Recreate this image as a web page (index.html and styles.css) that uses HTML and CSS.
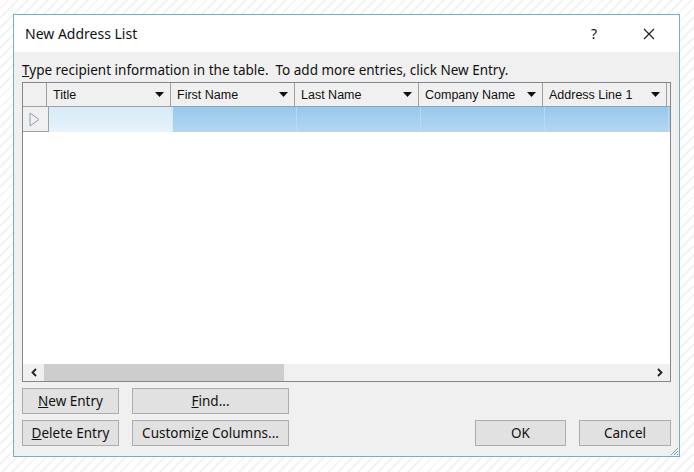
FILE: index.html
```html
<!DOCTYPE html>
<html lang="en">
<head>
    <meta charset="UTF-8">
    <title>New Address List</title>
    <link rel="stylesheet" href="styles.css">
</head>
<body>
    <div class="dialog">
        <!-- Title bar -->
        <div class="titlebar">
            <span class="title">New Address List</span>
            <span class="help">?</span>
            <span class="close">
                <svg width="12" height="12" viewBox="0 0 12 12"><path d="M1 1L11 11M11 1L1 11" stroke="#222" stroke-width="1.2" fill="none"/></svg>
            </span>
        </div>

        <div class="content">
            <p class="hint"><u>T</u>ype recipient information in the table.&nbsp; To add more entries, click New Entry.</p>

            <!-- Address grid -->
            <div class="grid">
                <div class="grid-head">
                    <div class="row-head"></div>
                    <div class="col">Title<svg class="drop" width="9" height="5" viewBox="0 0 9 5"><path d="M0 0H9L4.5 5Z" fill="#111"/></svg></div>
                    <div class="col">First Name<svg class="drop" width="9" height="5" viewBox="0 0 9 5"><path d="M0 0H9L4.5 5Z" fill="#111"/></svg></div>
                    <div class="col">Last Name<svg class="drop" width="9" height="5" viewBox="0 0 9 5"><path d="M0 0H9L4.5 5Z" fill="#111"/></svg></div>
                    <div class="col">Company Name<svg class="drop" width="9" height="5" viewBox="0 0 9 5"><path d="M0 0H9L4.5 5Z" fill="#111"/></svg></div>
                    <div class="col">Address Line 1<svg class="drop" width="9" height="5" viewBox="0 0 9 5"><path d="M0 0H9L4.5 5Z" fill="#111"/></svg></div>
                    <div class="col-rest"></div>
                </div>
                <div class="grid-row">
                    <div class="row-head">
                        <svg width="11" height="15" viewBox="0 0 11 15"><path d="M1 1L10 7.5L1 14Z" fill="none" stroke="#8b9bb4" stroke-width="1"/></svg>
                    </div>
                    <div class="cell cell-current"></div>
                    <div class="cell"></div>
                    <div class="cell"></div>
                    <div class="cell"></div>
                    <div class="cell"></div>
                    <div class="cell-rest"></div>
                </div>
                <div class="grid-body"></div>
                <div class="hscroll">
                    <span class="arrow">
                        <svg width="6" height="9" viewBox="0 0 6 9"><path d="M5 1L1.5 4.5L5 8" stroke="#222" stroke-width="1.8" fill="none"/></svg>
                    </span>
                    <div class="track">
                        <div class="thumb"></div>
                    </div>
                    <span class="arrow">
                        <svg width="6" height="9" viewBox="0 0 6 9"><path d="M1 1L4.5 4.5L1 8" stroke="#222" stroke-width="1.8" fill="none"/></svg>
                    </span>
                </div>
            </div>

            <!-- Buttons -->
            <div class="actions">
                <button class="btn"><u>N</u>ew Entry</button>
                <button class="btn"><u>F</u>ind...</button>
                <span></span>
                <span></span>
                <span></span>
                <button class="btn"><u>D</u>elete Entry</button>
                <button class="btn">Customi<u>z</u>e Columns...</button>
                <span></span>
                <button class="btn">OK</button>
                <button class="btn">Cancel</button>
            </div>
        </div>

        <svg class="grip" width="10" height="10" viewBox="0 0 10 10"><path d="M9 2L2 9M9 5L5 9M9 8L8 9" stroke="#7a9fb5" stroke-width="1"/></svg>
    </div>
</body>
</html>
```

FILE: styles.css
```css
body {
    margin: 0;
    width: 694px;
    height: 472px;
    overflow: hidden;
    font-family: "Noto Sans", "DejaVu Sans", sans-serif;
    color: #111;
    background: repeating-linear-gradient(135deg, #ffffff 0, #ffffff 5px, #f3f3f3 5px, #f3f3f3 7px);
}
.dialog {
    position: relative;
    margin: 14px 0 0 13px;
    width: 665px;
    height: 441px;
    border: 1px solid #74aecd;
    background: #f0f0f0;
    display: flex;
    flex-direction: column;
}
.titlebar {
    height: 37px;
    background: #fff;
    display: flex;
    align-items: center;
    padding-left: 11px;
}
.title {
    font-size: 14px;
    flex: 1;
}
.help {
    font-size: 14px;
    width: 14px;
    margin-right: 38px;
}
.close {
    display: flex;
    margin-right: 24px;
}
.content {
    flex: 1;
    padding: 0 8px 0 8px;
}
.hint {
    margin: 10px 0 4px 0;
    font-size: 13.5px;
    line-height: 16px;
}
.grid {
    height: 298px;
    border: 1px solid #828790;
    background: #fff;
    display: flex;
    flex-direction: column;
}
.grid-head,
.grid-row {
    display: flex;
}
.grid-head {
    height: 23px;
    background: #f0f0f0;
    border-bottom: 1px solid #a0a0a0;
    font-family: "Liberation Sans", Arial, sans-serif;
    font-size: 12.5px;
}
.row-head {
    width: 23px;
    border-right: 1px solid #a0a0a0;
    background: #f0f0f0;
    display: flex;
    align-items: center;
    justify-content: center;
}
.col {
    width: 111px;
    padding-left: 6px;
    padding-right: 6px;
    border-right: 1px solid #a0a0a0;
    display: flex;
    align-items: center;
    justify-content: space-between;
}
.col-rest {
    flex: 1;
}
.grid-row {
    height: 25px;
}
.grid-row .row-head {
    height: 24px;
    border-bottom: 1px solid #a0a0a0;
    padding-right: 2px;
}
.cell {
    width: 123px;
    border-right: 1px solid #b9daf1;
    background: linear-gradient(#98c8ec, #b3d7f1);
}
.cell-current {
    background: linear-gradient(#d6ebf7, #e6f3fa);
    border-right-color: #d6ebf7;
}
.cell-rest {
    flex: 1;
    background: linear-gradient(#98c8ec, #b3d7f1);
}
.grid-body {
    flex: 1;
}
.hscroll {
    height: 17px;
    display: flex;
    background: #f0f0f0;
}
.arrow {
    width: 21px;
    display: flex;
    align-items: center;
    justify-content: center;
}
.track {
    flex: 1;
}
.thumb {
    width: 240px;
    height: 17px;
    background: #cdcdcd;
}
.actions {
    margin-top: 6px;
    display: grid;
    grid-template-columns: 97px 157px 1fr 91px 92px;
    grid-template-rows: 26px 26px;
    column-gap: 13px;
    row-gap: 6px;
}
.btn {
    font-family: "Noto Sans", "DejaVu Sans", sans-serif;
    font-size: 13.5px;
    color: #111;
    background: #e1e1e1;
    border: 1px solid #adadad;
    padding: 0;
}
.grip {
    position: absolute;
    right: 0;
    bottom: 0;
}
```
